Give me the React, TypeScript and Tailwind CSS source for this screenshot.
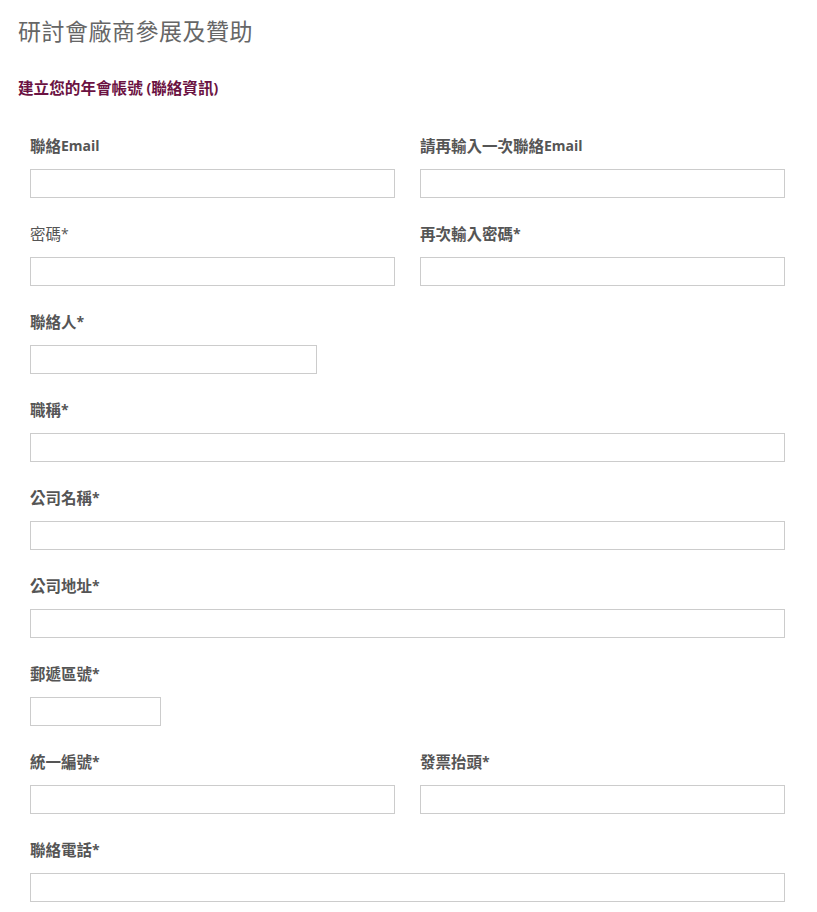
import React from "react";

const font = { fontFamily: '"Open Sans", "Noto Sans CJK TC", sans-serif' };

function Cjk({ text, size }: { text: string; size: string }) {
  const parts = text.split(/([\u3400-\u9fff]+)/).filter((p) => p.length > 0);
  return (
    <>
      {parts.map((p, i) =>
        /[\u3400-\u9fff]/.test(p) ? (
          <span key={i} className={size}>
            {p}
          </span>
        ) : (
          <span key={i}>{p}</span>
        )
      )}
    </>
  );
}

function Field({ label, bold = true, width = "w-full" }: { label: string; bold?: boolean; width?: string }) {
  return (
    <div className="flex flex-col">
      <label className={`flex h-5 items-center whitespace-pre leading-5 text-[14px] text-[#555] ${bold ? "font-bold" : "font-normal"}`}>
        <Cjk text={label} size="text-[15.5px] leading-5" />
      </label>
      <input type="text" className={`mt-[13px] h-[29px] border border-[#ccc] bg-white outline-none ${width}`} />
    </div>
  );
}

export default function App() {
  return (
    <div className="min-h-[912px] w-[817px] bg-white" style={font}>
      <div className="pl-[18px] pt-4">
        <h1 className="h-[30px] text-[23px] leading-[30px] text-[#666] font-normal tracking-[0.5px]">研討會廠商參展及贊助</h1>
        <h2 className="mt-8 flex h-5 items-center whitespace-pre text-[14px] leading-5 font-bold text-[#6b1242]">
          <Cjk text="建立您的年會帳號 (聯絡資訊)" size="text-[15.6px] leading-5" />
        </h2>
      </div>
      <div className="mt-[38px] pl-[30px] pr-[32px] flex flex-col gap-[26px]">
        <div className="grid grid-cols-2 gap-x-[25px]">
          <Field label="聯絡Email" />
          <Field label="請再輸入一次聯絡Email" />
        </div>
        <div className="grid grid-cols-2 gap-x-[25px]">
          <Field label="密碼*" bold={false} />
          <Field label="再次輸入密碼*" />
        </div>
        <Field label="聯絡人*" width="w-[287px]" />
        <Field label="職稱*" />
        <Field label="公司名稱*" />
        <Field label="公司地址*" />
        <Field label="郵遞區號*" width="w-[131px]" />
        <div className="grid grid-cols-2 gap-x-[25px]">
          <Field label="統一編號*" />
          <Field label="發票抬頭*" />
        </div>
        <Field label="聯絡電話*" />
      </div>
    </div>
  );
}
